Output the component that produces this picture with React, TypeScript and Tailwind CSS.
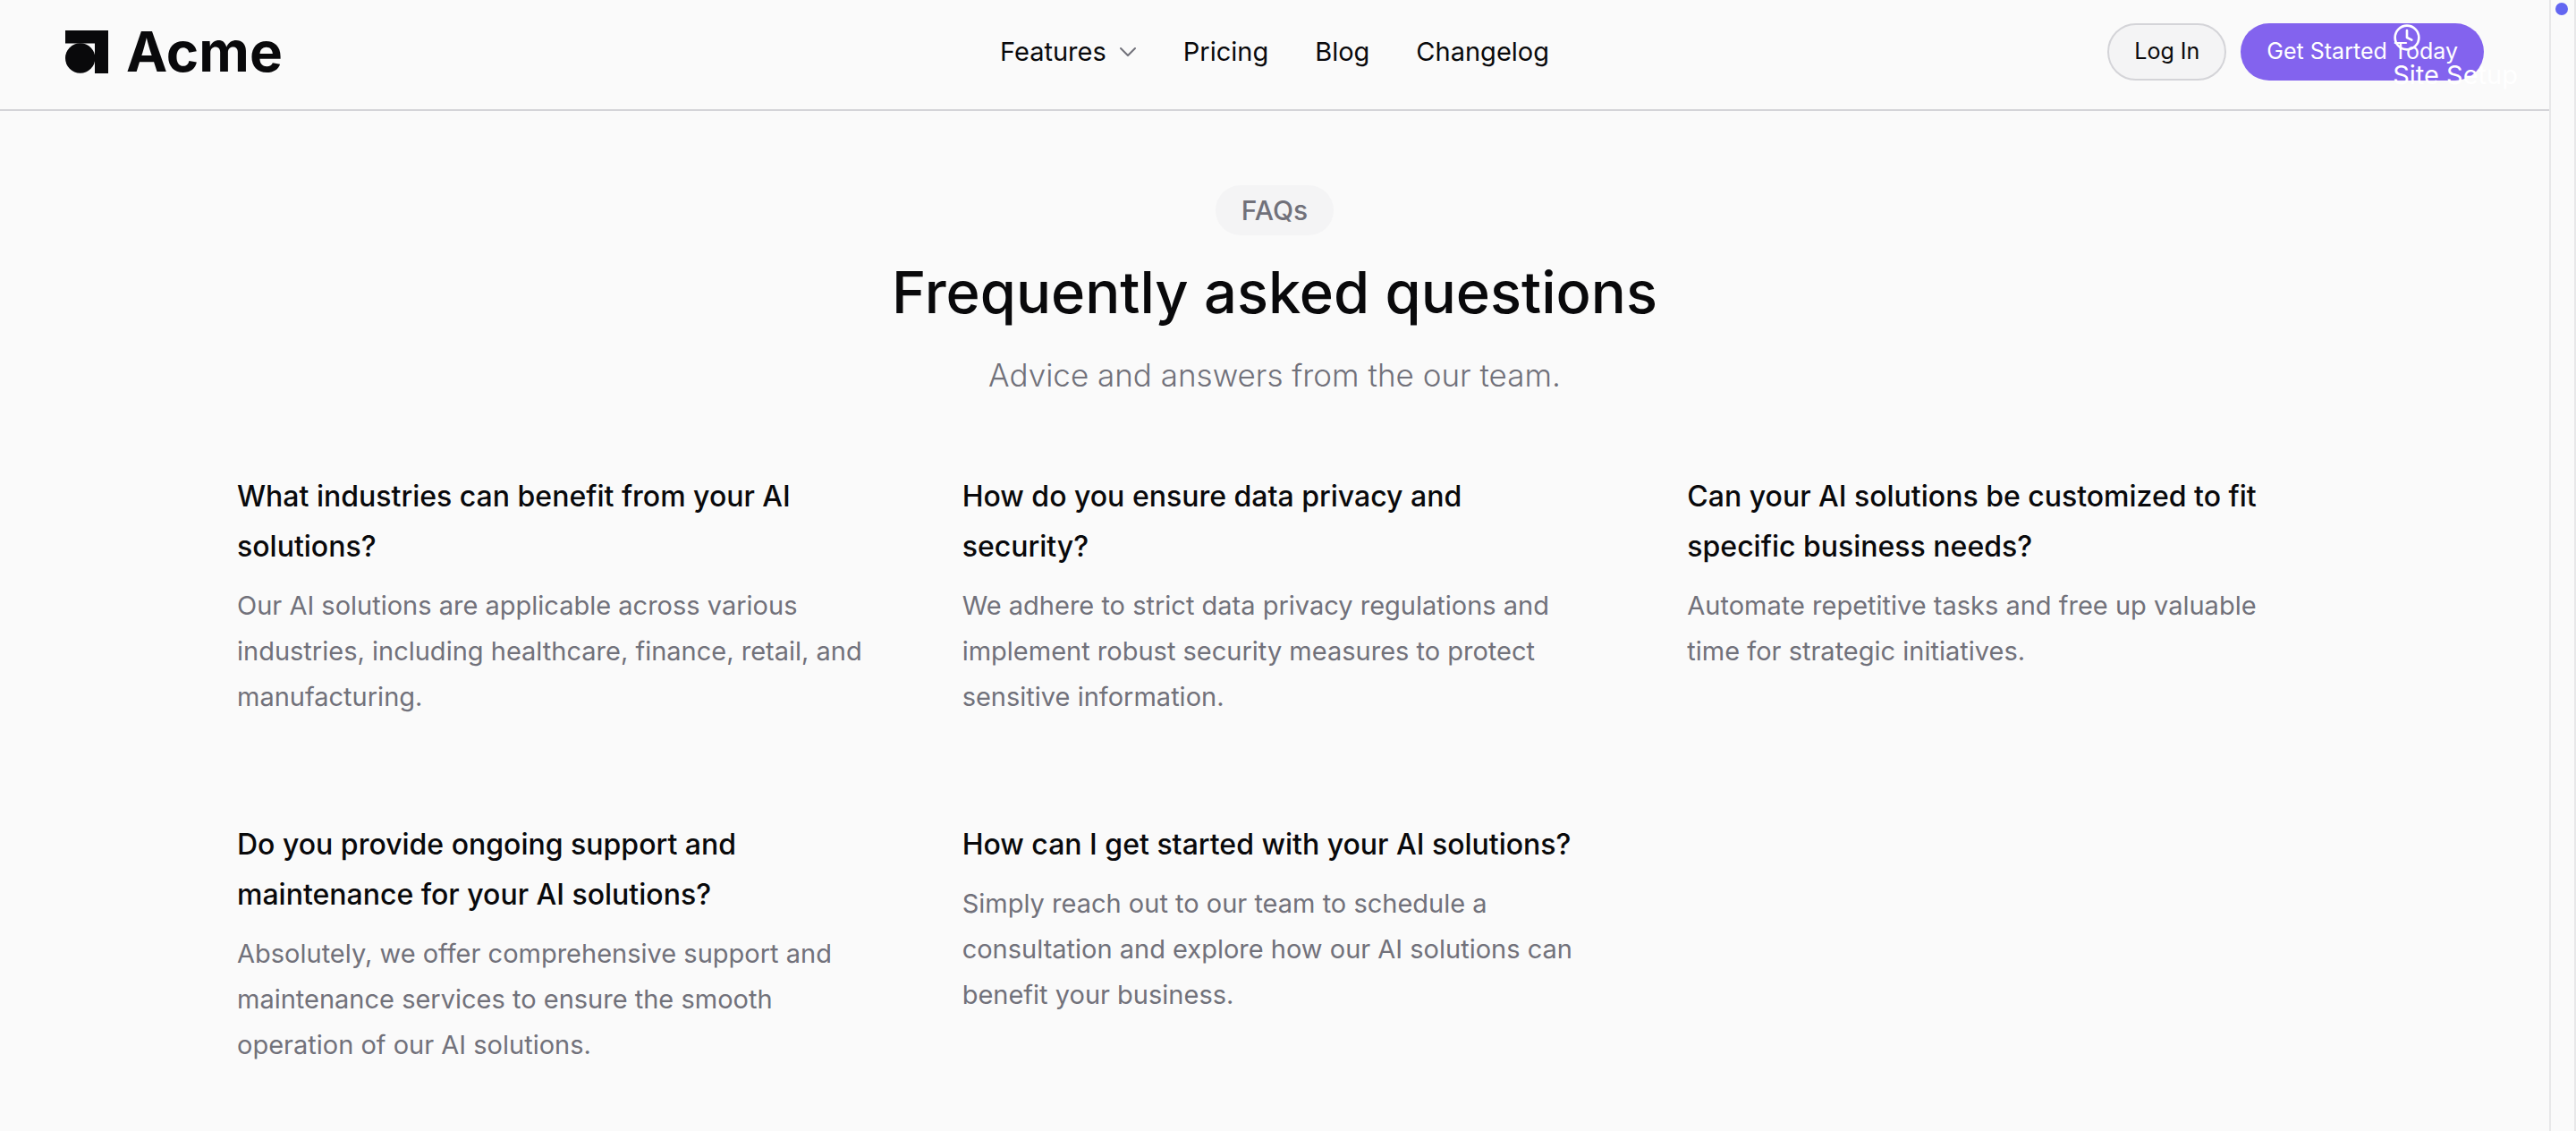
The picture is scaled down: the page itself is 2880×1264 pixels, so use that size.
import { Clock } from "lucide-react";

const links = ["Pricing", "Blog", "Changelog"];

const faqs = [
  {
    question: "What industries can benefit from your AI solutions?",
    answer:
      "Our AI solutions are applicable across various industries, including healthcare, finance, retail, and manufacturing.",
  },
  {
    question: "How do you ensure data privacy and security?",
    answer:
      "We adhere to strict data privacy regulations and implement robust security measures to protect sensitive information.",
  },
  {
    question: "Can your AI solutions be customized to fit specific business needs?",
    answer: "Automate repetitive tasks and free up valuable time for strategic initiatives.",
  },
  {
    question: "Do you provide ongoing support and maintenance for your AI solutions?",
    answer:
      "Absolutely, we offer comprehensive support and maintenance services to ensure the smooth operation of our AI solutions.",
  },
  {
    question: "How can I get started with your AI solutions?",
    answer:
      "Simply reach out to our team to schedule a consultation and explore how our AI solutions can benefit your business.",
  },
];

function Logo() {
  return (
    <a href="#" className="flex items-center gap-5">
      <svg viewBox="0 0 48 48" className="size-12" fill="currentColor" aria-hidden="true">
        <path d="M0 0h48v48H33V14.5H0z" />
        <circle cx="16.7" cy="31" r="16.7" />
      </svg>
      <span className="text-[62px] leading-16 font-bold">Acme</span>
    </a>
  );
}

function Header() {
  return (
    <header className="relative flex items-start border-b-2 border-[#d4d4d8] px-[73px] pt-[26px] pb-8">
      <div className="flex h-16 flex-1 items-center">
        <Logo />
      </div>
      <nav className="flex h-16 items-center gap-[52px] text-[29px] leading-10">
        <button type="button" className="flex items-center gap-[14px]">
          Features
          <svg
            viewBox="0 0 20 20"
            className="size-5"
            fill="none"
            stroke="#71717a"
            strokeWidth="2"
            strokeLinecap="round"
            strokeLinejoin="round"
            aria-hidden="true"
          >
            <path d="M2 6l8 8 8-8" />
          </svg>
        </button>
        {links.map((label) => (
          <a key={label} href="#">
            {label}
          </a>
        ))}
      </nav>
      <div className="flex flex-1 justify-end gap-4 text-[25px]">
        <button type="button" className="h-16 rounded-full border-2 border-[#d4d4d8] bg-[#f4f4f5] px-7">
          Log In
        </button>
        <button type="button" className="h-16 rounded-full bg-[#8363ee] px-[29px] text-white">
          Get Started Today
        </button>
      </div>
      <div className="absolute top-[26px] right-[35px] flex flex-col items-start text-[29px] leading-[51px] text-white">
        <Clock className="size-8" strokeWidth={2} />
        Site Setup
      </div>
    </header>
  );
}

export default function App() {
  return (
    <div className="flex min-h-screen bg-[#fafafa] font-['Inter',sans-serif] text-[#09090b]">
      <div className="min-w-0 flex-1">
        <Header />
        <main className="flex flex-col items-center px-16 pt-[83px] pb-14">
          <span className="rounded-full bg-[#f4f4f5] px-[29px] text-[30px] leading-14 font-medium text-[#71717a]">
            FAQs
          </span>
          <h1 className="mt-7 text-[65px] leading-[72px] font-medium">Frequently asked questions</h1>
          <p className="mt-7 text-[35px] leading-14 font-light text-[#71717a]">
            Advice and answers from the our team.
          </p>
          <dl className="mt-20 grid w-full max-w-[2320px] grid-cols-3 gap-28">
            {faqs.map(({ question, answer }) => (
              <div key={question}>
                <dt className="text-[32px] leading-14 font-medium">{question}</dt>
                <dd className="mt-3 -mr-[3px] text-[29px] leading-[51px] text-[#71717a]">{answer}</dd>
              </div>
            ))}
          </dl>
        </main>
      </div>
      <aside className="w-[30px] border-x-2 border-[#e8e8e9] pt-[3px] pl-[5px]">
        <span className="block size-[14px] rounded-full bg-[#6366f1]" />
      </aside>
    </div>
  );
}
